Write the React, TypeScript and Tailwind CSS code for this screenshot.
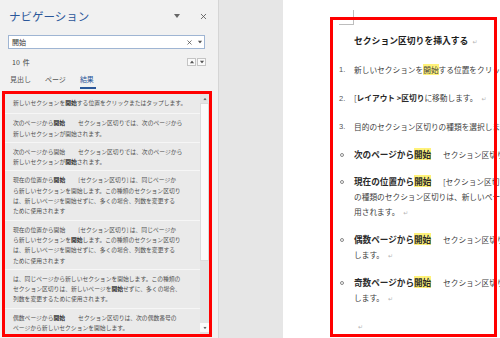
import React from 'react';
import { X } from 'lucide-react';

const jp = "font-['Noto_Sans_CJK_JP','Noto_Sans',sans-serif]";

const B: React.FC<{ children: React.ReactNode }> = ({ children }) => (
  <span className="font-bold text-[#2a2a2a]">{children}</span>
);

const Gap: React.FC = () => <span className="inline-block w-[13px]" />;

const results: React.ReactNode[][] = [
  [<>新しいセクションを<B>開始</B>する位置をクリックまたはタップします。</>],
  [
    <>次のページから<B>開始</B><Gap />セクション区切りでは、次のページから</>,
    <>新しいセクションが開始されます。</>,
  ],
  [
    <>次のページから開始<Gap />セクション区切りでは、次のページから</>,
    <>新しいセクションが<B>開始</B>されます。</>,
  ],
  [
    <>現在の位置から<B>開始</B><Gap />[セクション区切り] は、同じページか</>,
    <>ら新しいセクションを開始します。この種類のセクション区切り</>,
    <>は、新しいページを開始せずに、多くの場合、列数を変更する</>,
    <>ために使用されます</>,
  ],
  [
    <>現在の位置から開始<Gap />[セクション区切り] は、同じページか</>,
    <>ら新しいセクションを<B>開始</B>します。この種類のセクション区切り</>,
    <>は、新しいページを開始せずに、多くの場合、列数を変更する</>,
    <>ために使用されます</>,
  ],
  [
    <>は、同じページから新しいセクションを開始します。この種類の</>,
    <>セクション区切りは、新しいページを<B>開始</B>せずに、多くの場合、</>,
    <>列数を変更するために使用されます。</>,
  ],
  [
    <>偶数ページから<B>開始</B><Gap />セクション区切りは、次の偶数番号の</>,
    <>ページから新しいセクションを開始します。</>,
  ],
];

const Tri: React.FC<{ up?: boolean; className?: string }> = ({ up, className }) => (
  <svg width="6" height="4" viewBox="0 0 6 4" className={className}>
    <path d={up ? 'M0 4 L3 0 L6 4 Z' : 'M0 0 L6 0 L3 4 Z'} fill="currentColor" />
  </svg>
);

const Mark: React.FC = () => (
  <span className="ml-[4px] font-['DejaVu_Sans'] text-[6px] font-normal text-[#b5b5b5]">↵</span>
);

const Hl: React.FC<{ children: React.ReactNode }> = ({ children }) => (
  <span className="bg-[#fff27a]">{children}</span>
);

const NavPane: React.FC = () => (
  <aside className="flex h-full w-[219px] shrink-0 flex-col border-r border-[#d5d5d5] bg-[#f1f1f1]">
    {/* header */}
    <div className="flex h-[35px] items-start pl-[9px] pr-[10px] pt-[8px]">
      <span className="text-[11.5px] leading-[16px] text-[#2b579a]">ナビゲーション</span>
      <Tri className="ml-auto mt-[6px] text-[#666]" />
      <X size={9} strokeWidth={2.2} className="ml-[19px] mt-[4px] text-[#555]" />
    </div>

    {/* search box */}
    <div className="ml-[8px] flex h-[14px] w-[197px] items-center border border-[#9fb5d3] bg-white pl-[3px]">
      <span className="text-[7px] leading-none text-[#333]">開始</span>
      <X size={7} strokeWidth={2.4} className="ml-auto text-[#444]" />
      <Tri className="ml-[4px] mr-[1px] scale-75 text-[#555]" />
    </div>

    {/* count */}
    <div className="ml-[12px] mt-[6px] flex h-[14px] items-center">
      <span className="flex gap-[3px] text-[7px] text-[#444]">
        <span>10</span>
        <span>件</span>
      </span>
      <div className="ml-auto mr-[12px] flex gap-[1px]">
        <div className="flex h-[8px] w-[9px] items-center justify-center border border-[#c4c4c4] bg-[#fafafa] text-[#555]">
          <Tri up className="scale-75" />
        </div>
        <div className="flex h-[8px] w-[9px] items-center justify-center border border-[#c4c4c4] bg-[#fafafa] text-[#555]">
          <Tri className="scale-75" />
        </div>
      </div>
    </div>

    {/* tabs */}
    <div className="flex h-[20px] gap-[14px] pl-[10px] pt-[5px] text-[7px] leading-[10px] text-[#555]">
      <span>見出し</span>
      <span>ページ</span>
      <div className="flex flex-col">
        <span className="text-[#2b579a]">結果</span>
        <div className="mt-[3px] h-[2px] w-[16px] bg-[#2b579a]" />
      </div>
    </div>

    {/* results */}
    <div className="ml-[2px] mt-[2px] flex h-[246px] w-[210px] border-[3px] border-[#ff0000]">
      <div className="flex-1 overflow-hidden bg-[#eaeaea] text-[5.8px] leading-[10.3px] text-[#505050]">
        {results.map((lines, i) => (
          <div
            key={i}
            className={`border-b border-[#f6f6f6] px-[8px] whitespace-nowrap ${i === 0 ? 'pt-[4px] pb-[5px]' : 'pt-[4px] pb-[3px]'}`}
          >
            {lines.map((l, j) => (
              <div key={j}>{l}</div>
            ))}
          </div>
        ))}
      </div>
      <div className="flex w-[9px] flex-col bg-[#e4e4e4]">
        <div className="flex h-[9px] items-center justify-center text-[#666]">
          <Tri up className="scale-[0.6]" />
        </div>
        <div className="h-[158px] border border-[#dcdcdc] bg-[#fbfbfb]" />
        <div className="flex-1" />
        <div className="mb-[2px] flex h-[9px] items-center justify-center bg-[#fbfbfb] text-[#666]">
          <Tri className="scale-[0.6]" />
        </div>
      </div>
    </div>
  </aside>
);

const Num: React.FC<{ n: string }> = ({ n }) => (
  <span className="w-[15px] shrink-0 font-['Liberation_Sans'] text-[7.5px] text-[#555]">{n}</span>
);

const Bullet: React.FC = () => (
  <span className="flex w-[15px] shrink-0 items-center pl-[1px]">
    <span className="h-[4px] w-[4px] rounded-full border border-[#888]" />
  </span>
);

const Head: React.FC<{ children: React.ReactNode }> = ({ children }) => (
  <span className="inline-block w-[89px] text-[8.6px] font-bold text-[#2a2a2a]">{children}</span>
);

const Page: React.FC = () => (
  <main className="relative h-full flex-1 overflow-hidden bg-white">
    <div className={`pt-[10px] text-[7.7px] leading-[15px] text-[#404040] whitespace-nowrap ${jp}`}>
      {/* crop mark */}
      <div className="ml-[56px] h-[15px] w-[15px] border-b border-r border-[#bdbdbd]" />

      <div className="mt-[8px] mb-[13px] pl-[71px] text-[8.8px] font-bold text-[#1e1e1e]">
        セクション区切りを挿入する<Mark />
      </div>

      <div className="mb-[13px] flex items-center pl-[56px]">
        <Num n="1." />
        <span>新しいセクションを<Hl>開始</Hl>する位置をクリックまたはタップします。</span>
      </div>
      <div className="mb-[13px] flex items-center pl-[56px]">
        <Num n="2." />
        <span>[<B>レイアウト &gt;区切り</B>に移動します。<Mark /></span>
      </div>
      <div className="mb-[13px] flex items-center pl-[56px]">
        <Num n="3." />
        <span>目的のセクション区切りの種類を選択します。</span>
      </div>

      <div className="mb-[12px] flex items-center pl-[56px]">
        <Bullet />
        <span>
          <Head>次のページから<Hl>開始</Hl></Head>セクション区切りでは、次のページから
        </span>
      </div>

      <div className="mb-[12px] flex pl-[56px]">
        <span className="flex h-[15px] items-center">
          <Bullet />
        </span>
        <div>
          <div>
            <Head>現在の位置から<Hl>開始</Hl></Head>[セクション区切り] は、同じページから新しいセクション
          </div>
          <div>の種類のセクション区切りは、新しいページを開始せずに</div>
          <div>
            用されます。<Mark />
          </div>
        </div>
      </div>

      <div className="mb-[12px] flex pl-[56px]">
        <span className="flex h-[15px] items-center">
          <Bullet />
        </span>
        <div>
          <div>
            <Head>偶数ページから<Hl>開始</Hl></Head>セクション区切りは、次の偶数番号の
          </div>
          <div>
            します。<Mark />
          </div>
        </div>
      </div>

      <div className="mb-[12px] flex pl-[56px]">
        <span className="flex h-[15px] items-center">
          <Bullet />
        </span>
        <div>
          <div>
            <Head>奇数ページから<Hl>開始</Hl></Head>セクション区切りは、次の奇数番号の
          </div>
          <div>
            します。<Mark />
          </div>
        </div>
      </div>

      <div className="pl-[71px]">
        <Mark />
      </div>
    </div>

    {/* annotation frame */}
    <div className="absolute left-[47px] right-[3px] top-[17px] bottom-[1px] border-[3px] border-[#ff0000]" />
  </main>
);

export default function App() {
  return (
    <div className={`flex h-[338px] w-[500px] overflow-hidden bg-white ${jp}`}>
      <NavPane />
      <div className="h-full w-[64px] shrink-0 bg-[#e6e6e6]" />
      <Page />
    </div>
  );
}
